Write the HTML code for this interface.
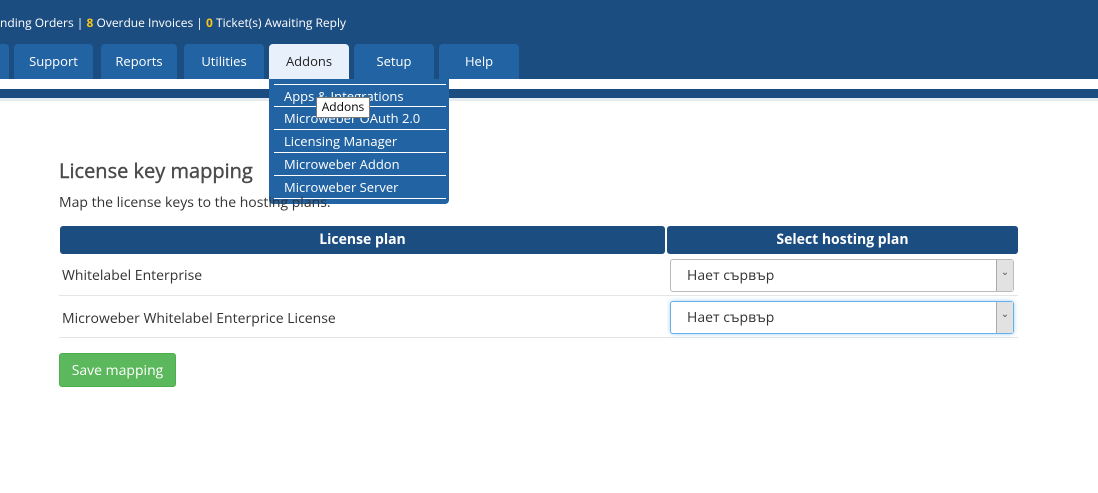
<!DOCTYPE html>
<html><head><meta charset="utf-8"><style>
body{margin:0;width:1098px;height:493px;background:#fff;font-family:"Open Sans","DejaVu Sans","Liberation Sans",sans-serif;position:relative;overflow:hidden;color:#333}
.top{position:absolute;left:0;top:0;width:1098px;height:79px;background:#1c4d80}
.stat{position:absolute;left:0;top:14px;font-size:12px;color:#fff;white-space:nowrap}
.stat b{color:#f5c518}
.tab{position:absolute;top:44px;height:35px;background:#2263a3;color:#fff;font-size:13px;text-align:center;line-height:34px;border-radius:4px 4px 0 0}
.white{position:absolute;top:79px;left:0;width:1098px;height:10px;background:#fff}
.bar{position:absolute;top:89px;left:0;width:1098px;height:9px;background:#1c4d80}
.gray{position:absolute;top:98px;left:0;width:1098px;height:3px;background:#e6ebee}
.dd{position:absolute;left:269px;top:79px;width:180px;height:125px;background:#2263a3;border-radius:0 0 4px 4px}
.dd div{position:absolute;left:5px;width:162px;border-top:1px solid #fff;color:#fff;font-size:13px;padding-left:10px;line-height:22px;height:22px}
.tip{position:absolute;left:316px;top:97px;width:52px;height:19px;background:#fff;border:1px solid #777;font-size:12px;line-height:18px;text-align:center;color:#000}
h2{position:absolute;left:59px;top:157px;margin:0;font-size:20px;font-weight:normal;color:#4a4a4a;-webkit-text-stroke:0.4px #4a4a4a}
.p{position:absolute;left:59px;top:193px;font-size:14px;color:#333}
.th{position:absolute;top:226px;height:28px;background:#1c4d80;color:#fff;font-weight:bold;font-size:14px;text-align:center;line-height:28px;border-radius:3px}
.td{position:absolute;left:62px;font-size:14px}
.line{position:absolute;left:59px;width:959px;height:1px;background:#e5e5e5}
.sel{position:absolute;left:670px;width:344px;height:33px;border:1px solid #bbb;border-radius:3px;font-size:14px;line-height:31px;box-sizing:border-box;padding-left:16px;background:#fff}
.sel i{position:absolute;right:0;top:0;width:16px;height:100%;background:#e2e2e2;border-left:1px solid #aaa;font-style:normal;font-size:10px;line-height:22px;text-align:center;color:#555}
.btn{position:absolute;left:59px;top:353px;width:117px;height:34px;background:#5cb85c;border:1px solid #4cae4c;box-sizing:border-box;border-radius:3px;color:#fff;font-size:14px;text-align:center;line-height:34px}
</style></head><body>
<div class="top"><div class="stat">nding Orders | <b>8</b> Overdue Invoices | <b>0</b> Ticket(s) Awaiting Reply</div></div>
<div class="tab" style="left:0;width:9px;border-radius:0 4px 0 0"></div>
<div class="tab" style="left:14px;width:79px">Support</div>
<div class="tab" style="left:101px;width:76px">Reports</div>
<div class="tab" style="left:184px;width:80px">Utilities</div>
<div class="tab" style="left:269px;width:80px;background:#e8f0fb;color:#222">Addons</div>
<div class="tab" style="left:354px;width:80px">Setup</div>
<div class="tab" style="left:439px;width:80px">Help</div>
<div class="white"></div><div class="bar"></div><div class="gray"></div>
<div class="dd">
<div style="top:5px">Apps &amp; Integrations</div>
<div style="top:27px">Microweber OAuth 2.0</div>
<div style="top:50px">Licensing Manager</div>
<div style="top:73px">Microweber Addon</div>
<div style="top:96px">Microweber Server</div>
<div style="top:119px;height:0"></div>
</div>
<div class="tip">Addons</div>
<h2>License key mapping</h2>
<div class="p">Map the license keys to the hosting plans.</div>
<div class="th" style="left:60px;width:605px">License plan</div>
<div class="th" style="left:667px;width:351px">Select hosting plan</div>
<div class="td" style="top:266px">Whitelabel Enterprise</div>
<div class="line" style="top:295px"></div>
<div class="td" style="top:309px">Microweber Whitelabel Enterprice License</div>
<div class="line" style="top:337px"></div>
<div class="sel" style="top:259px">Нает сървър<i>⌄</i></div>
<div class="sel" style="top:301px;border-color:#66afe9;box-shadow:0 0 4px rgba(102,175,233,.6)">Нает сървър<i>⌄</i></div>
<div class="btn">Save mapping</div>
</body></html>
